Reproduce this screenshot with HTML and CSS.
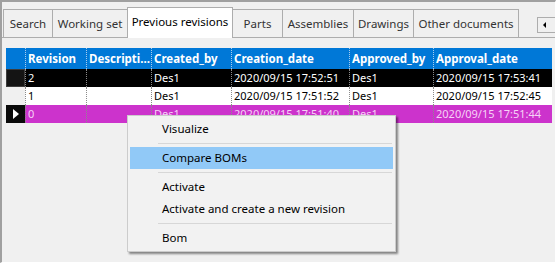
FILE: index.html
```html
<!DOCTYPE html>
<html lang="en">
<head>
    <meta charset="UTF-8">
    <title>Previous revisions</title>
    <link rel="stylesheet" href="styles.css">
</head>
<body>
<div class="window">
    <div class="tabs">
        <div class="tab tab-search">Search</div>
        <div class="tab tab-working">Working set</div>
        <div class="tab tab-previous active">Previous revisions</div>
        <div class="tab tab-parts">Parts</div>
        <div class="tab tab-assemblies">Assemblies</div>
        <div class="tab tab-drawings">Drawings</div>
        <div class="tab tab-other">Other documents</div>
        <div class="tab-scroll">
            <svg width="4" height="6" viewBox="0 0 4 6"><path d="M3 0L0 3L3 6Z" fill="#000"/></svg>
        </div>
    </div>
    <div class="page">
        <div class="grid">
            <div class="grid-row header">
                <div class="cell selector"></div>
                <div class="cell">Revision</div>
                <div class="cell">Descripti...</div>
                <div class="cell">Created_by</div>
                <div class="cell">Creation_date</div>
                <div class="cell">Approved_by</div>
                <div class="cell">Approval_date</div>
            </div>
            <div class="grid-row row-black">
                <div class="cell selector"></div>
                <div class="cell">2</div>
                <div class="cell"></div>
                <div class="cell">Des1</div>
                <div class="cell">2020/09/15 17:52:51</div>
                <div class="cell">Des1</div>
                <div class="cell">2020/09/15 17:53:41</div>
            </div>
            <div class="grid-row row-white">
                <div class="cell selector"></div>
                <div class="cell">1</div>
                <div class="cell"></div>
                <div class="cell">Des1</div>
                <div class="cell">2020/09/15 17:51:52</div>
                <div class="cell">Des1</div>
                <div class="cell">2020/09/15 17:52:45</div>
            </div>
            <div class="grid-row row-magenta">
                <div class="cell selector current">
                    <svg width="6" height="10" viewBox="0 0 6 10"><path d="M0 0L6 5L0 10Z" fill="#fff"/></svg>
                </div>
                <div class="cell">0</div>
                <div class="cell"></div>
                <div class="cell">Des1</div>
                <div class="cell">2020/09/15 17:51:40</div>
                <div class="cell">Des1</div>
                <div class="cell">2020/09/15 17:51:44</div>
            </div>
        </div>
    </div>

    <div class="context-menu">
        <div class="menu-item">Visualize</div>
        <div class="menu-separator"></div>
        <div class="menu-item hover">Compare BOMs</div>
        <div class="menu-separator"></div>
        <div class="menu-item">Activate</div>
        <div class="menu-item">Activate and create a new revision</div>
        <div class="menu-separator"></div>
        <div class="menu-item">Bom</div>
    </div>
</div>
</body>
</html>
```

FILE: styles.css
```css
body {
    margin: 0;
    font-family: "Noto Sans", "Open Sans", sans-serif;
    font-size: 11px;
    color: #000;
    background-color: #f0f0f0;
}
.window {
    position: relative;
    width: 556px;
    height: 263px;
    box-sizing: border-box;
    overflow: hidden;
    border-top: 2px solid #a0a0a0;
    border-left: 2px solid #a0a0a0;
    border-right: 1px solid #fff;
    border-bottom: 1px solid #fff;
    background-color: #f0f0f0;
}

/* Tab strip */
.tabs {
    display: flex;
    align-items: flex-end;
    height: 36px;
    box-sizing: border-box;
    padding-left: 1px;
    border-bottom: 1px solid #adadad;
}
.tab {
    height: 28px;
    box-sizing: border-box;
    margin-left: -1px;
    border: 1px solid #adadad;
    border-bottom: none;
    display: flex;
    align-items: center;
    justify-content: center;
    font-size: 11.5px;
    color: #333;
    white-space: nowrap;
}
.tab:first-child {
    margin-left: 0;
}
.tab.active {
    position: relative;
    z-index: 1;
    height: 31px;
    margin-bottom: -1px;
    padding-bottom: 3px;
    background-color: #fff;
    color: #000;
}
.tab-search { width: 50px; }
.tab-working { width: 76px; }
.tab-previous { width: 106px; }
.tab-parts { width: 51px; }
.tab-assemblies { width: 72px; }
.tab-drawings { width: 61px; }
.tab-other { width: 106px; }
.tab-scroll {
    align-self: flex-start;
    margin-top: 15px;
    margin-left: auto;
    margin-right: -2px;
    width: 20px;
    height: 16px;
    box-sizing: border-box;
    border: 1px solid #adadad;
    background-color: #f0f0f0;
    display: flex;
    align-items: center;
    padding-left: 5px;
}

/* Grid */
.page {
    padding: 10px 0 0 4px;
}
.grid {
    width: 546px;
}
.grid-row {
    display: grid;
    grid-template-columns: 19px 61px 65px 80px 118px 84px 119px;
    height: 18px;
    line-height: 18px;
}
.cell {
    box-sizing: border-box;
    padding-left: 2px;
    border-left: 1px dotted #8a8a8a;
    white-space: nowrap;
    overflow: hidden;
}
.cell.selector {
    border-left: none;
    padding-left: 0;
    display: flex;
    align-items: center;
    justify-content: center;
}
.header {
    height: 21px;
    line-height: 21px;
    background-color: #0078d7;
    color: #fff;
    font-size: 11.5px;
    font-weight: bold;
}
.header .cell {
    border-left-color: #a9cdee;
}
.row-black {
    background-color: #000;
    color: #fff;
}
.row-black .selector {
    background-color: #141414;
    border: 1px solid #3c3c3c;
}
.row-white {
    background-color: #fff;
}
.row-white .selector {
    background-color: #f0f0f0;
}
.row-magenta {
    background-color: #cc33cc;
    color: #f6d2f6;
}
.row-magenta .selector {
    background-color: #0a0a0a;
}

/* Context menu */
.context-menu {
    position: absolute;
    left: 125px;
    top: 113px;
    z-index: 5;
    width: 269px;
    box-sizing: border-box;
    padding: 2px 0;
    border: 1px solid #cccccc;
    background-color: #f2f2f2;
    box-shadow: 2px 2px 2px rgba(0, 0, 0, 0.45);
}
.menu-item {
    height: 22px;
    line-height: 22px;
    margin: 0 2px;
    padding-left: 32px;
    font-size: 11.5px;
    color: #000;
}
.menu-item.hover {
    background-color: #91c9f7;
}
.menu-separator {
    height: 1px;
    margin: 3px 3px 3px 30px;
    background-color: #d7d7d7;
}
```
